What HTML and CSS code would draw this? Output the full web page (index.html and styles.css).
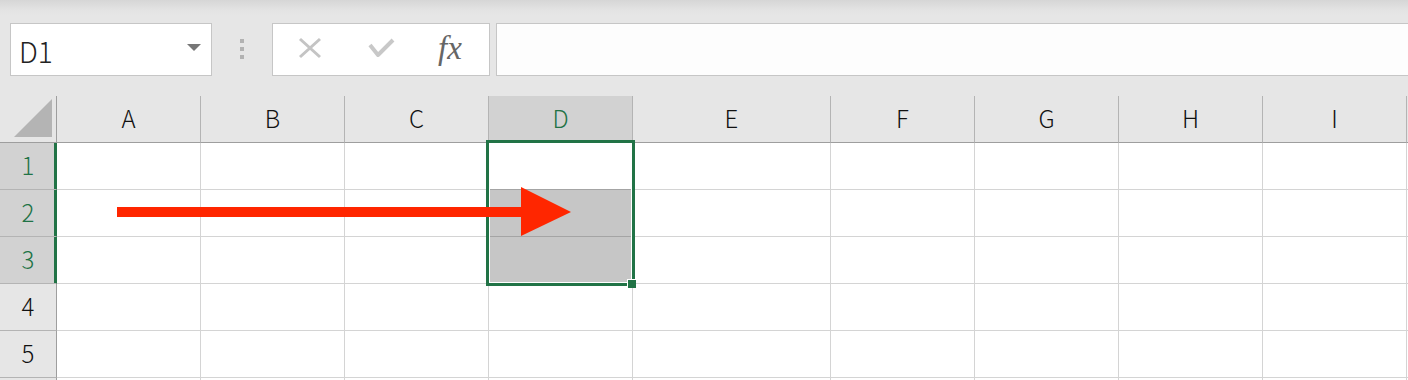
FILE: index.html
```html
<!DOCTYPE html>
<html lang="ja">
<head>
<meta charset="utf-8">
<title>Excel selection</title>
<link rel="stylesheet" href="styles.css">
</head>
<body>
<div class="app">
  <div class="toolbar">
    <div class="namebox">
      <span class="name">D1</span>
      <span class="dd"></span>
    </div>
    <div class="grip"><i></i><i></i><i></i></div>
    <div class="fbtns">
      <svg class="ico-x" width="24" height="22" viewBox="0 0 24 22"><path d="M2 2 L22 20 M22 2 L2 20" stroke="#c4c4c4" stroke-width="3" fill="none"/></svg>
      <svg class="ico-ok" width="28" height="22" viewBox="0 0 28 22"><path d="M2 8 L10 18 L25 3" stroke="#c8c8c8" stroke-width="4" fill="none" stroke-linejoin="round"/></svg>
      <span class="fx">fx</span>
    </div>
    <div class="finput"></div>
  </div>

  <div class="sheet">
    <div class="corner"><svg width="40" height="40" viewBox="0 0 40 40"><polygon points="39,1 39,39 1,39" fill="#b4b4b4"/></svg></div>
    <div class="ch">A</div><div class="ch">B</div><div class="ch">C</div><div class="ch active">D</div><div class="ch">E</div><div class="ch">F</div><div class="ch">G</div><div class="ch">H</div><div class="ch">I</div><div class="ch"></div>

    <div class="rh active">1</div><div class="c"></div><div class="c"></div><div class="c"></div><div class="c dtop"></div><div class="c"></div><div class="c"></div><div class="c"></div><div class="c"></div><div class="c"></div><div class="c"></div>
    <div class="rh active">2</div><div class="c"></div><div class="c"></div><div class="c"></div><div class="c sel"></div><div class="c"></div><div class="c"></div><div class="c"></div><div class="c"></div><div class="c"></div><div class="c"></div>
    <div class="rh active">3</div><div class="c"></div><div class="c"></div><div class="c"></div><div class="c sel"></div><div class="c"></div><div class="c"></div><div class="c"></div><div class="c"></div><div class="c"></div><div class="c"></div>
    <div class="rh">4</div><div class="c"></div><div class="c"></div><div class="c"></div><div class="c"></div><div class="c"></div><div class="c"></div><div class="c"></div><div class="c"></div><div class="c"></div><div class="c"></div>
    <div class="rh">5</div><div class="c"></div><div class="c"></div><div class="c"></div><div class="c"></div><div class="c"></div><div class="c"></div><div class="c"></div><div class="c"></div><div class="c"></div><div class="c"></div>
    <div class="rh"></div><div class="c"></div><div class="c"></div><div class="c"></div><div class="c"></div><div class="c"></div><div class="c"></div><div class="c"></div><div class="c"></div><div class="c"></div><div class="c"></div>

    <div class="selection"></div>
    <div class="handle"></div>
    <svg class="arrow" width="600" height="160" viewBox="0 0 600 160">
      <rect x="117" y="111" width="406" height="10" fill="#ff2600"/>
      <polygon points="521,91 571,116 521,140" fill="#ff2600"/>
    </svg>
  </div>
</div>
</body>
</html>
```

FILE: styles.css
```css
html, body {
  margin: 0;
  padding: 0;
  overflow: hidden;
}
body {
  background: #e6e6e6;
  font-family: "Noto Sans CJK JP", "Noto Sans", sans-serif;
  font-weight: 300;
}
.app {
  width: 1408px;
  height: 380px;
  overflow: hidden;
  background: linear-gradient(#d6d6d6 0, #e3e3e3 10px, #e6e6e6 16px);
}
.toolbar {
  display: flex;
  align-items: stretch;
  height: 53px;
  padding-top: 23px;
  padding-left: 10px;
  box-sizing: content-box;
}
.namebox {
  width: 202px;
  box-sizing: border-box;
  border: 1px solid #c6c6c6;
  background: #fff;
  display: flex;
  align-items: center;
  justify-content: space-between;
  padding: 0 10px 0 8px;
}
.name {
  font-size: 28px;
  color: #222;
  line-height: 1;
  margin-top: 2px;
}
.dd {
  width: 0;
  height: 0;
  border-left: 7px solid transparent;
  border-right: 7px solid transparent;
  border-top: 7px solid #777;
  margin-top: -4px;
}
.grip {
  width: 60px;
  display: flex;
  flex-direction: column;
  align-items: center;
  justify-content: center;
  gap: 4px;
  margin-top: -2px;
}
.grip i {
  display: block;
  width: 4px;
  height: 4px;
  background: #b2b2b2;
}
.fbtns {
  width: 218px;
  box-sizing: border-box;
  border: 1px solid #c6c6c6;
  background: #fff;
  display: flex;
  align-items: center;
  padding-left: 25px;
}
.ico-x { margin-top: -3px; }
.ico-ok { margin-left: 46px; margin-top: -3px; }
.fx {
  margin-left: 42px;
  font-family: "Liberation Serif", serif;
  font-style: italic;
  font-weight: normal;
  font-size: 33px;
  color: #666;
  line-height: 1;
  margin-top: -2px;
}
.finput {
  flex: 1;
  margin-left: 6px;
  margin-right: -20px;
  border: 1px solid #c6c6c6;
  background: #fdfdfd;
}
.sheet {
  position: relative;
  margin-top: 20px;
  display: grid;
  grid-template-columns: 57px repeat(4, 144px) 198px repeat(5, 144px);
  grid-auto-rows: 47px;
  width: 1635px;
}
.sheet > div {
  box-sizing: border-box;
}
.corner {
  border-right: 1px solid #9e9e9e;
  border-bottom: 1px solid #9e9e9e;
  display: flex;
  align-items: flex-end;
  justify-content: flex-end;
  padding: 0 3px 4px 0;
}
.corner svg { display: block; }
.ch {
  display: flex;
  align-items: center;
  justify-content: center;
  border-right: 1px solid #b4b4b4;
  border-bottom: 1px solid #9e9e9e;
  font-size: 24px;
  color: #111;
  padding-bottom: 4px;
}
.ch.active {
  background: #d2d2d2;
  color: #217346;
}
.rh {
  display: flex;
  align-items: center;
  justify-content: center;
  border-right: 1px solid #9e9e9e;
  border-bottom: 1px solid #b4b4b4;
  font-size: 24px;
  color: #111;
  padding-bottom: 3px;
}
.rh.active {
  background: #d2d2d2;
  color: #217346;
  border-right-color: #217346;
  box-shadow: inset -2px 0 0 #217346;
}
.c {
  background: #fff;
  border-right: 1px solid #d4d4d4;
  border-bottom: 1px solid #d4d4d4;
}
.c.dtop { border-bottom-color: #a4a4a4; }
.c.sel {
  background: #c6c6c6;
  border-bottom-color: #a4a4a4;
}
.selection {
  position: absolute;
  left: 486px;
  top: 44px;
  width: 149px;
  height: 146px;
  border: 3px solid #217346;
  box-shadow: inset 0 0 0 1px #fff;
}
.handle {
  position: absolute;
  left: 627px;
  top: 183px;
  width: 9px;
  height: 9px;
  background: #217346;
  border-top: 1px solid #fff;
  border-left: 1px solid #fff;
}
.arrow {
  position: absolute;
  left: 0;
  top: 0;
}
```
